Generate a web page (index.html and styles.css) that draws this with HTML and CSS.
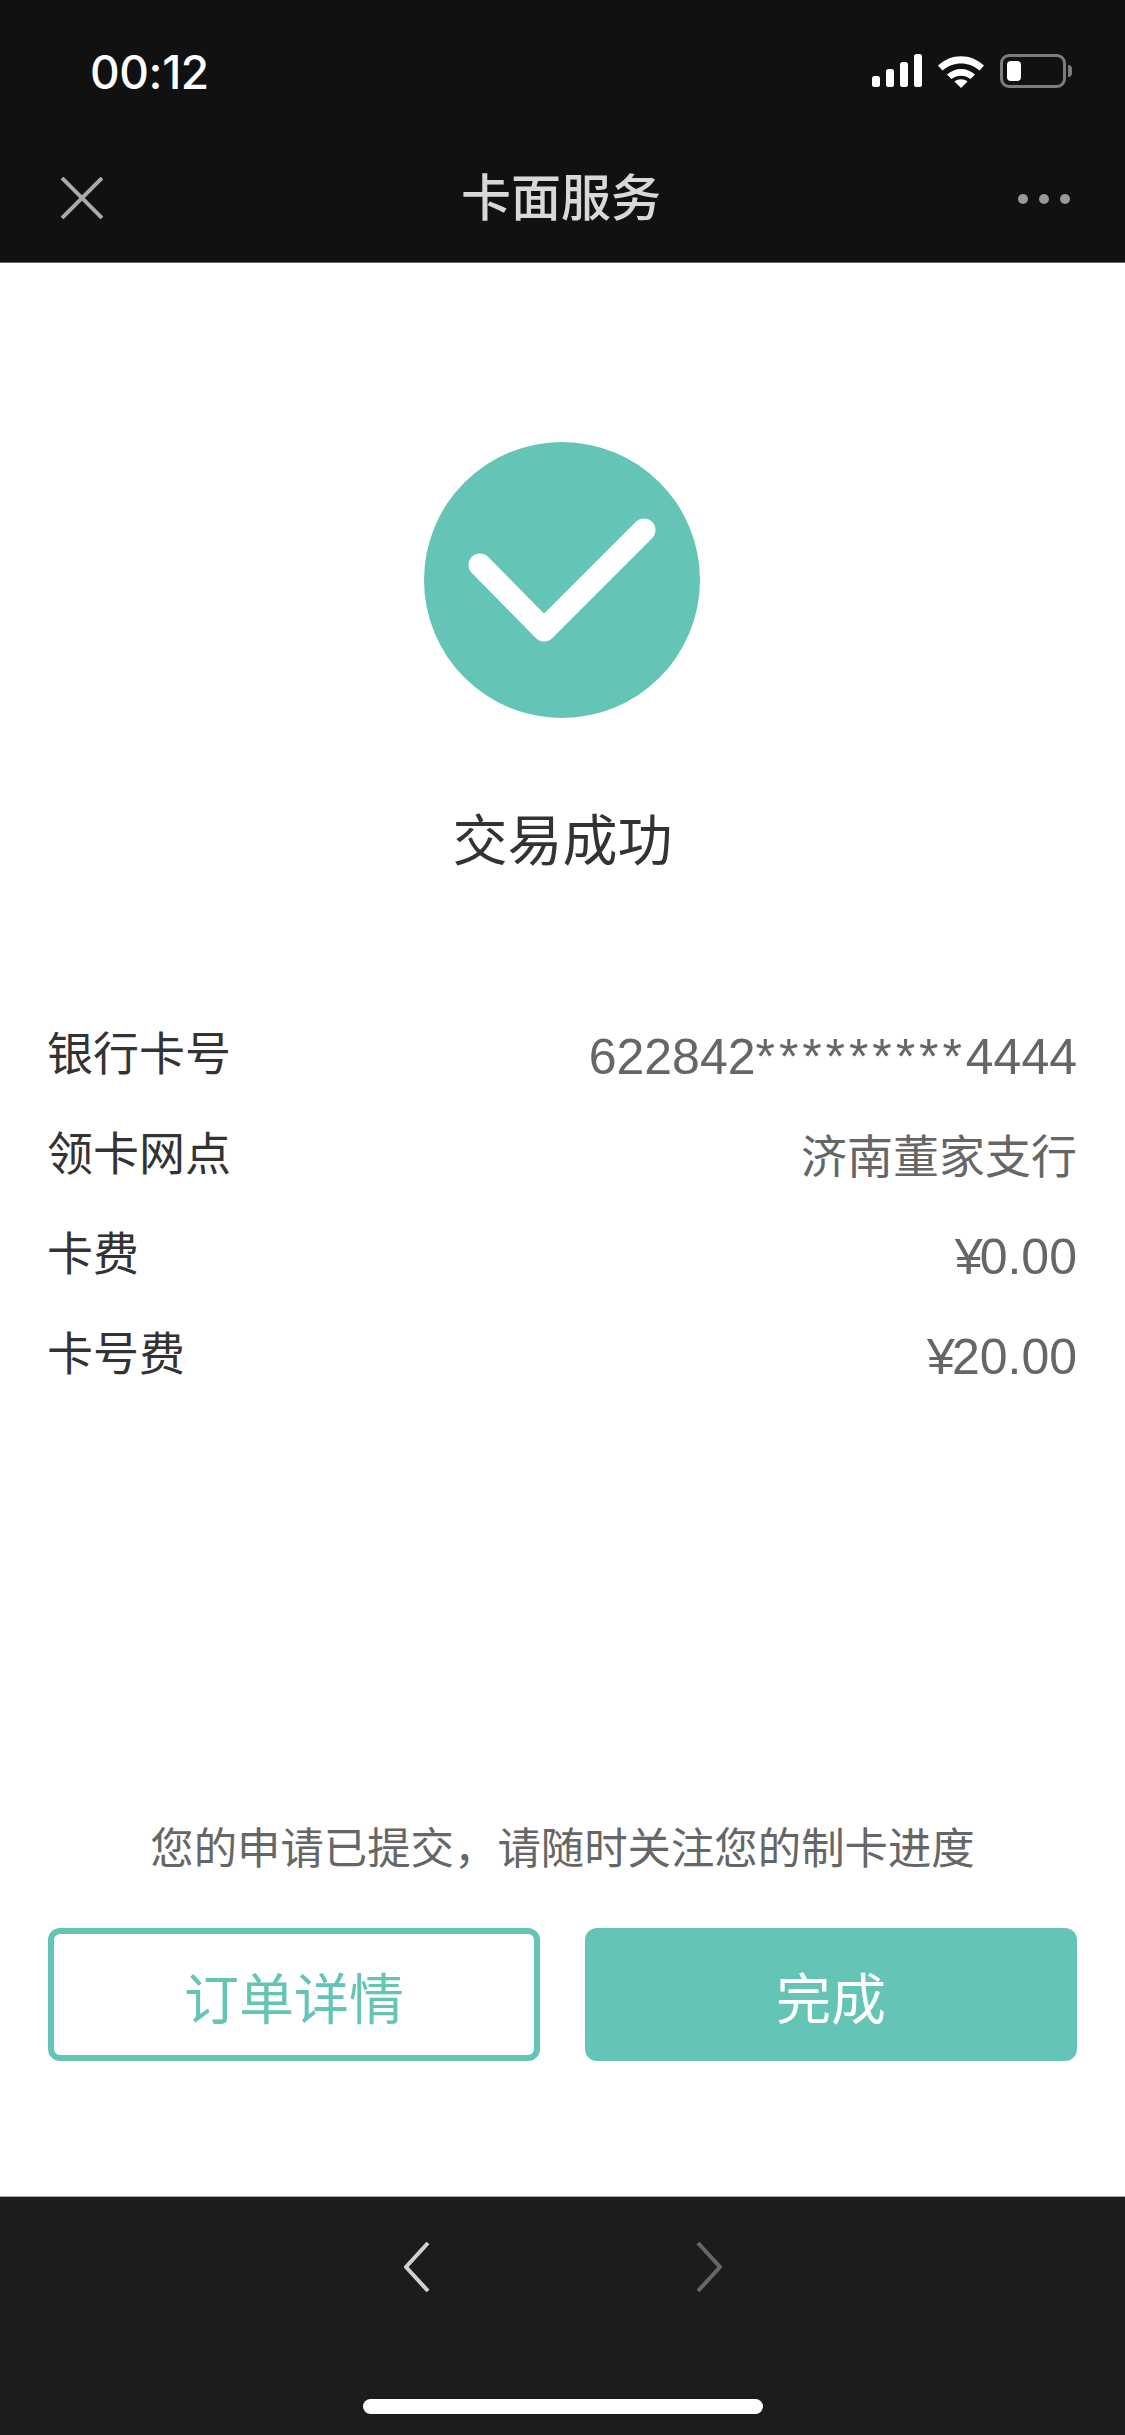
FILE: index.html
```html
<!DOCTYPE html>
<html lang="zh-CN">
<head>
    <meta charset="UTF-8">
    <meta name="viewport" content="width=device-width, initial-scale=1.0">
    <title>卡面服务</title>
    <link rel="stylesheet" href="styles.css">
</head>
<body>
    <div class="page">
        <header class="top">
            <div class="status">
                <span class="time">00:12</span>
                <div class="status-icons">
                    <svg class="signal" width="50" height="33" viewBox="0 0 50 33">
                        <rect x="0" y="22" width="8" height="11" rx="2.5"/>
                        <rect x="14" y="15" width="8" height="18" rx="2.5"/>
                        <rect x="28" y="8" width="8" height="25" rx="2.5"/>
                        <rect x="42" y="0" width="8" height="33" rx="2.5"/>
                    </svg>
                    <svg class="wifi" width="48" height="35" viewBox="0 0 48 35">
                        <path d="M1 12.5 C14 0 34 0 47 12.5 L42.5 17.5 C32 8 16 8 5.5 17.5 Z"/>
                        <path d="M10 21.5 C18 14 30 14 38 21.5 L33.5 26 C28 21.5 20 21.5 14.5 26 Z"/>
                        <path d="M17.5 28.5 C21 25.5 27 25.5 30.5 28.5 L24 35 Z"/>
                    </svg>
                    <div class="battery">
                        <div class="battery-body"><div class="battery-level"></div></div>
                        <div class="battery-nub"></div>
                    </div>
                </div>
            </div>
            <nav class="nav">
                <svg class="close" width="42" height="42" viewBox="0 0 42 42">
                    <path d="M1 1 L41 41 M41 1 L1 41"/>
                </svg>
                <h1 class="nav-title">卡面服务</h1>
                <div class="more"><i></i><i></i><i></i></div>
            </nav>
        </header>

        <main class="content">
            <svg class="tick" width="276" height="276" viewBox="0 0 276 276">
                <circle cx="138" cy="138" r="138"/>
                <path d="M56 123 L120 188 L220 88"/>
            </svg>
            <h2 class="result">交易成功</h2>

            <div class="rows">
                <div class="row"><span class="label">银行卡号</span><span class="value num">622842<span class="stars">*********</span>4444</span></div>
                <div class="row"><span class="label">领卡网点</span><span class="value">济南董家支行</span></div>
                <div class="row"><span class="label">卡费</span><span class="value num"><span class="yen">¥</span>0.00</span></div>
                <div class="row"><span class="label">卡号费</span><span class="value num"><span class="yen">¥</span>20.00</span></div>
            </div>

            <p class="note">您的申请已提交，请随时关注您的制卡进度</p>
            <div class="buttons">
                <div class="btn btn-line">订单详情</div>
                <div class="btn btn-fill">完成</div>
            </div>
        </main>

        <footer class="bottom">
            <div class="arrows">
                <svg class="arrow" width="26" height="50" viewBox="0 0 26 50">
                    <path d="M24 1 L2 25 L24 49"/>
                </svg>
                <svg class="arrow arrow-off" width="26" height="50" viewBox="0 0 26 50">
                    <path d="M2 1 L24 25 L2 49"/>
                </svg>
            </div>
            <div class="home-bar"></div>
        </footer>
    </div>
</body>
</html>
```

FILE: styles.css
```css
*{
    margin: 0px;
    padding: 0px;
    box-sizing: border-box;
}
body{
    font-family: "Liberation Sans", "Noto Sans CJK SC", sans-serif;
    background-color: white;
}
.page{
    width: 1125px;
    height: 2435px;
    display: flex;
    flex-direction: column;
    overflow: hidden;
}

/* top bar */
.top{
    height: 263px;
    background-color: #111112;
    border-bottom: 1px solid #666;
}
.status{
    height: 143px;
    padding: 51px 53px 0px 90px;
    display: flex;
    justify-content: space-between;
    align-items: flex-start;
}
.time{
    color: white;
    font-size: 46px;
    line-height: 42px;
    font-family: "Inter", "Liberation Sans", sans-serif;
    font-weight: 500;
    letter-spacing: -0.4px;
}
.status-icons{
    display: flex;
    align-items: center;
    gap: 15px;
    margin-top: 2px;
}
.signal, .wifi{
    fill: white;
}
.battery{
    display: flex;
    align-items: center;
    gap: 2px;
}
.battery-body{
    width: 66px;
    height: 34px;
    border: 3px solid #7c7c7c;
    border-radius: 9px;
    padding: 4px;
}
.battery-level{
    width: 14px;
    height: 100%;
    background-color: white;
    border-radius: 4px;
}
.battery-nub{
    width: 4px;
    height: 12px;
    background-color: #7c7c7c;
    border-radius: 0px 4px 4px 0px;
}
.nav{
    height: 119px;
    padding: 0px 55px 10px 61px;
    display: flex;
    align-items: center;
    justify-content: space-between;
    position: relative;
}
.close{
    stroke: #aaa;
    stroke-width: 4;
    fill: none;
}
.nav-title{
    position: absolute;
    left: 0;
    right: 0;
    top: 23px;
    text-align: center;
    color: #d8d8d8;
    font-size: 50px;
    line-height: 66px;
    font-weight: 500;
    padding-right: 3px;
}
.more{
    display: flex;
    gap: 11px;
    margin-top: 3px;
}
.more i{
    display: block;
    width: 10px;
    height: 10px;
    border-radius: 50%;
    background-color: #999;
}

/* content */
.content{
    flex: 1;
    padding: 179px 48px 0px;
    display: flex;
    flex-direction: column;
    align-items: center;
}
.tick{
    margin-right: 2px;
}
.tick circle{
    fill: #64c5b6;
}
.tick path{
    fill: none;
    stroke: white;
    stroke-width: 23;
    stroke-linecap: round;
    stroke-linejoin: round;
}
.result{
    margin-top: 85px;
    font-size: 55px;
    line-height: 76px;
    font-weight: 400;
    color: #333;
}
.rows{
    width: 100%;
    margin-top: 121px;
    display: flex;
    flex-direction: column;
}
.row{
    height: 100px;
    display: flex;
    justify-content: space-between;
    align-items: center;
    font-size: 46px;
}
.label{
    color: #333;
    margin-left: -1px;
}
.value{
    color: #666;
    padding-top: 6px;
}
.num{
    font-size: 50px;
    padding-top: 14px;
}
.stars{
    letter-spacing: 3.9px;
}
.yen{
    letter-spacing: -3px;
}
.note{
    margin-top: 418px;
    font-size: 43.4px;
    line-height: 62px;
    color: #666;
    text-align: center;
}
.buttons{
    width: 100%;
    margin-top: 48px;
    display: grid;
    grid-template-columns: 1fr 1fr;
    gap: 45px;
}
.btn{
    height: 133px;
    border-radius: 12px;
    font-size: 55px;
    display: flex;
    align-items: center;
    justify-content: center;
}
.btn-line{
    border: 6px solid #64c5b6;
    color: #64c5b6;
}
.btn-fill{
    background-color: #64c5b6;
    color: white;
}

/* bottom bar */
.bottom{
    height: 239px;
    background-color: #1c1c1d;
    border-top: 1px solid #aaa;
    display: flex;
    flex-direction: column;
    align-items: center;
}
.arrows{
    margin-top: 45px;
    display: flex;
    gap: 266px;
}
.arrow{
    stroke: #d0d0d0;
    stroke-width: 4;
    fill: none;
}
.arrow-off{
    stroke: #666;
}
.home-bar{
    margin-top: 107px;
    width: 400px;
    height: 15px;
    background-color: white;
    border-radius: 8px;
}
```
